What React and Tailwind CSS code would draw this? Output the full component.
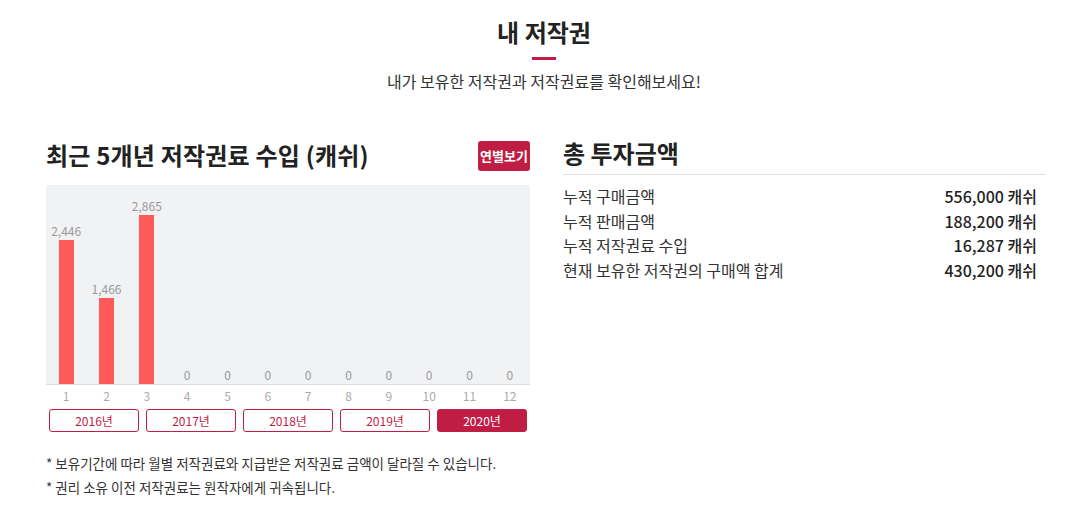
import React from "react";

const data = [2446, 1466, 2865, 0, 0, 0, 0, 0, 0, 0, 0, 0];
const years = ["2016년", "2017년", "2018년", "2019년", "2020년"];
const rows = [
  ["누적 구매금액", "556,000 캐쉬"],
  ["누적 판매금액", "188,200 캐쉬"],
  ["누적 저작권료 수입", "16,287 캐쉬"],
  ["현재 보유한 저작권의 구매액 합계", "430,200 캐쉬"],
];

export default function App() {
  const scale = 169 / 2865;
  return (
    <div
      className="w-[1088px] h-[516px] bg-white text-[#333]"
      style={{ fontFamily: '"Noto Sans CJK KR", "Noto Sans", sans-serif' }}
    >
      <div className="flex flex-col items-center pt-[14px]">
        <h1 className="text-[24px] leading-[36px] font-bold text-[#222]">내 저작권</h1>
        <div className="mt-[7px] w-[24px] h-[3px] bg-[#c01d45]" />
        <p className="mt-[10px] text-[16px] leading-[22px] text-[#333]">
          내가 보유한 저작권과 저작권료를 확인해보세요!
        </p>
      </div>

      <div className="ml-[46px] mt-[49px] flex gap-[33px]">
        <div className="w-[484px]">
          <div className="flex items-center justify-between h-[30px]">
            <h2 className="text-[24px] font-bold text-[#222] leading-[30px] -mt-[3px] tracking-[0.2px]">
              최근 5개년 저작권료 수입 (캐쉬)
            </h2>
            <button className="w-[52px] h-[30px] rounded-[3px] bg-[#c01d45] text-white text-[13px] font-bold flex items-center justify-center whitespace-nowrap">
              연별보기
            </button>
          </div>
          <div className="mt-[14px] h-[200px] bg-[#f1f2f4] border-b border-[#dcdcdc] grid grid-cols-12">
            {data.map((v, i) => (
              <div key={i} className="flex flex-col items-center justify-end">
                <span className="text-[12px] leading-[14px] text-[#999] mb-[2px]">
                  {v.toLocaleString("en-US")}
                </span>
                <div className="w-[15px] bg-[#ff5a5a]" style={{ height: v * scale }} />
              </div>
            ))}
          </div>
          <div className="grid grid-cols-12 mt-[2px]">
            {data.map((_, i) => (
              <span key={i} className="text-center text-[12px] leading-[18px] text-[#aaa]">
                {i + 1}
              </span>
            ))}
          </div>
          <div className="flex gap-[7px] px-[3px] mt-[4px]">
            {years.map((y, i) => (
              <button
                key={y}
                className={
                  i === 4
                    ? "flex-1 h-[23px] rounded-[3px] bg-[#c01d45] border border-[#c01d45] text-white text-[12px] leading-none"
                    : "flex-1 h-[23px] rounded-[3px] bg-white border border-[#c01d45] text-[#c01d45] text-[12px] leading-none"
                }
              >
                {y}
              </button>
            ))}
          </div>
          <div className="mt-[19px] text-[13.5px] leading-[24px] text-[#333]">
            <p>* 보유기간에 따라 월별 저작권료와 지급받은 저작권료 금액이 달라질 수 있습니다.</p>
            <p>* 권리 소유 이전 저작권료는 원작자에게 귀속됩니다.</p>
          </div>
        </div>

        <div className="w-[483px]">
          <h2 className="text-[24px] font-bold text-[#222] leading-[26px] pb-[8px] border-b border-[#e0e0e0] -mt-[1px]">
            총 투자금액
          </h2>
          <div className="mt-[9px] pr-[9px]">
            {rows.map(([k, v]) => (
              <div key={k} className="flex justify-between items-center h-[24.6px] text-[16px] leading-[24px]">
                <span className="text-[#333]">{k}</span>
                <span className="font-medium text-[#222]">{v}</span>
              </div>
            ))}
          </div>
        </div>
      </div>
    </div>
  );
}
